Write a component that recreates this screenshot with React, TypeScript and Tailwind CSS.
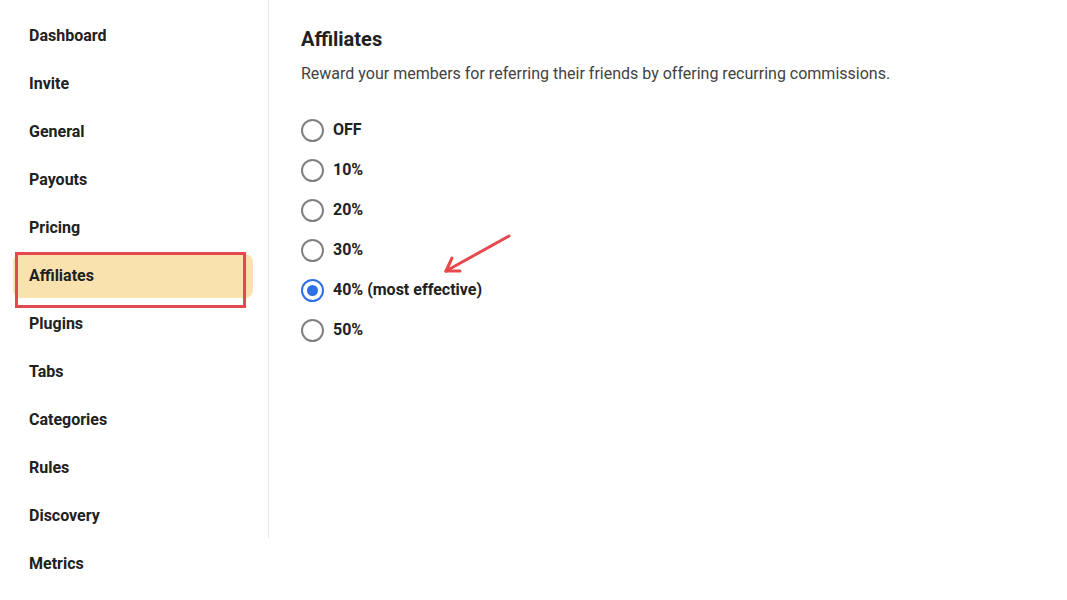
import { useState } from 'react';

const NAV = [
  'Dashboard',
  'Invite',
  'General',
  'Payouts',
  'Pricing',
  'Affiliates',
  'Plugins',
  'Tabs',
  'Categories',
  'Rules',
  'Discovery',
  'Metrics',
];

const RATES = ['OFF', '10%', '20%', '30%', '40% (most effective)', '50%'];

export default function App() {
  const [rate, setRate] = useState('40% (most effective)');

  return (
    <main
      className="relative flex h-[600px] w-[1067px] overflow-hidden bg-white text-[#212121]"
      style={{ fontFamily: 'Roboto, "Liberation Sans", sans-serif' }}
    >
      {/* Settings nav */}
      <aside className="relative flex w-[269px] shrink-0 flex-col">
        <div className="absolute right-0 top-0 h-[538px] w-px bg-[#e6e6e6]" />
        <nav className="flex flex-col gap-1 pl-[13px] pr-4 pt-[14px]">
          {NAV.map((item) => (
            <div
              key={item}
              className={
                item === 'Affiliates'
                  ? 'flex h-11 items-center rounded-lg bg-[#f9e2ad] pl-4 text-base font-bold'
                  : 'flex h-11 items-center rounded-lg pl-4 text-base font-bold'
              }
            >
              {item}
            </div>
          ))}
        </nav>
        {/* callout box */}
        <div className="absolute left-[15px] top-[252px] h-[56px] w-[231px] border-[3px] border-[#e5484d]" />
      </aside>

      {/* Content */}
      <section className="flex-1 pl-8 pt-[27px]">
        <h1 className="text-xl font-bold leading-6">Affiliates</h1>
        <p className="mt-[11px] text-base text-[#424242]">
          Reward your members for referring their friends by offering recurring commissions.
        </p>
        <div className="mt-[24px] flex flex-col">
          {RATES.map((r) => {
            const on = r === rate;
            return (
              <label key={r} className="flex h-10 cursor-pointer items-center gap-[9px]">
                <input
                  type="radio"
                  name="rate"
                  className="sr-only"
                  checked={on}
                  onChange={() => setRate(r)}
                />
                <span
                  className={
                    on
                      ? 'flex h-[23px] w-[23px] items-center justify-center rounded-full border-2 border-[#2f6fe8]'
                      : 'flex h-[23px] w-[23px] items-center justify-center rounded-full border-2 border-[#808080]'
                  }
                >
                  {on && <span className="h-[11px] w-[11px] rounded-full bg-[#2f6fe8]" />}
                </span>
                <span className="text-base font-bold">{r}</span>
              </label>
            );
          })}
        </div>
      </section>

      {/* arrow pointing at the recommended rate */}
      <svg
        className="pointer-events-none absolute left-[436px] top-[228px]"
        width="84"
        height="52"
        viewBox="0 0 84 52"
        fill="none"
        stroke="#e5484d"
        strokeWidth="3"
        strokeLinecap="round"
      >
        <path d="M73 8 L10 43" />
        <path d="M10 43 L24 43" />
        <path d="M10 43 L16 30" />
      </svg>
    </main>
  );
}
